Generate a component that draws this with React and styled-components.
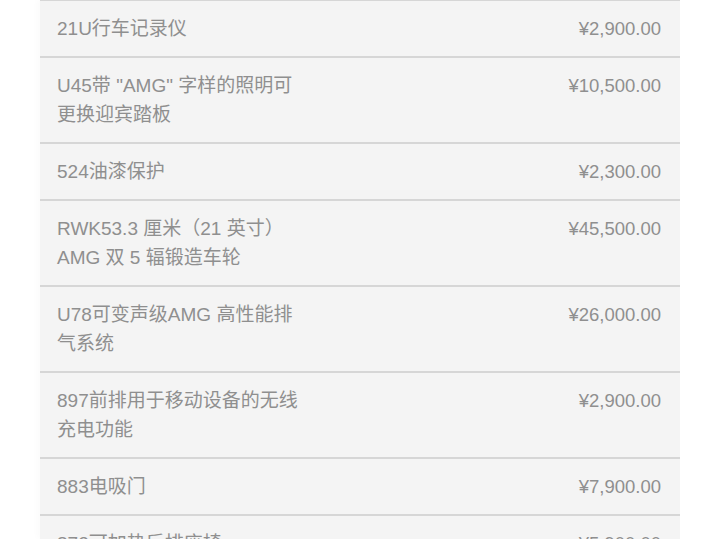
import React from 'react';
import styled, { createGlobalStyle } from 'styled-components';

const items = [
  { name: ['21U行车记录仪'], price: '¥2,900.00' },
  { name: ['U45带 "AMG" 字样的照明可', '更换迎宾踏板'], price: '¥10,500.00' },
  { name: ['524油漆保护'], price: '¥2,300.00' },
  { name: ['RWK53.3 厘米（21 英寸）', 'AMG 双 5 辐锻造车轮'], price: '¥45,500.00' },
  { name: ['U78可变声级AMG 高性能排', '气系统'], price: '¥26,000.00' },
  { name: ['897前排用于移动设备的无线', '充电功能'], price: '¥2,900.00' },
  { name: ['883电吸门'], price: '¥7,900.00' },
  { name: ['872可加热后排座椅'], price: '¥5,900.00' },
];

const GlobalStyle = createGlobalStyle`
  html, body {
    margin: 0;
    padding: 0;
    background: #ffffff;
    overflow: hidden;
  }
  body {
    font-family: "Liberation Sans", "Noto Sans CJK SC", sans-serif;
  }
`;

const Page = styled.div`
  height: 540px;
  display: flex;
  justify-content: center;
  margin-top: -1px;
`;

const Panel = styled.div`
  width: 640px;
  background: #f4f4f4;
  box-shadow: -3px 0 6px rgba(0, 0, 0, 0.02);
`;

const Row = styled.div`
  display: flex;
  justify-content: space-between;
  align-items: flex-start;
  padding: 13px 19px 13px 17px;
  border-top: 2px solid #d6d6d6;
  font-size: 18.5px;
  line-height: 29px;
  color: #8f8f8f;
`;

const Name = styled.div`
  display: flex;
  flex-direction: column;
  width: 260px;
  font-size: 19px;
`;

const Line = styled.span`
  white-space: nowrap;
`;

const Price = styled.div`
  white-space: nowrap;
`;

function App() {
  return (
    <>
      <GlobalStyle />
      <Page>
        <Panel>
          {items.map((item, i) => (
            <Row key={i}>
              <Name>
                {item.name.map((l, j) => (
                  <Line key={j}>{l}</Line>
                ))}
              </Name>
              <Price>{item.price}</Price>
            </Row>
          ))}
        </Panel>
      </Page>
    </>
  );
}

export default App;
